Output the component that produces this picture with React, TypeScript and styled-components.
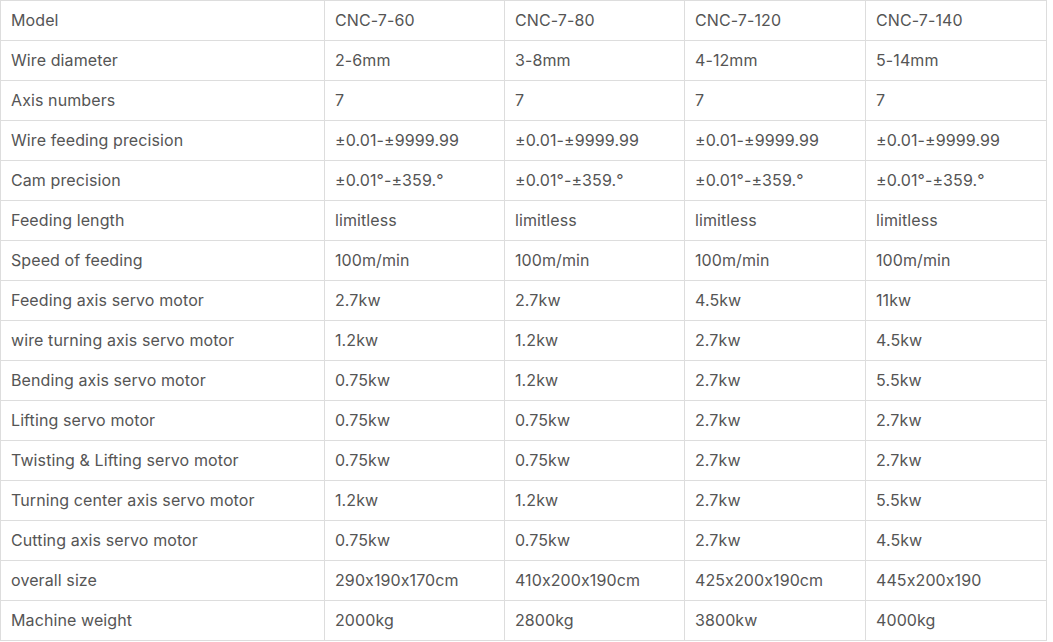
import React from "react";
import styled, { createGlobalStyle } from "styled-components";

const Global = createGlobalStyle`
  html, body { margin: 0; padding: 0; background: #fff; }
  body { font-family: Inter, "Noto Sans", sans-serif; }
`;

const Table = styled.table`
  border-collapse: collapse;
  table-layout: fixed;
  width: 1047px;
  font-family: Inter, "Noto Sans", sans-serif;
  font-size: 16px;
  letter-spacing: 0.1px;
  font-feature-settings: "calt" 0;
  color: #555;
`;

const Row = styled.tr`
  height: 40px;
`;

const Cell = styled.td`
  border: 1px solid #ddd;
  padding: 0 10px 2px 10px;
  height: 39px;
  box-sizing: border-box;
  white-space: nowrap;
  vertical-align: middle;
`;

const rows: string[][] = [
  ["Model", "CNC-7-60", "CNC-7-80", "CNC-7-120", "CNC-7-140"],
  ["Wire diameter", "2-6mm", "3-8mm", "4-12mm", "5-14mm"],
  ["Axis numbers", "7", "7", "7", "7"],
  ["Wire feeding precision", "±0.01-±9999.99", "±0.01-±9999.99", "±0.01-±9999.99", "±0.01-±9999.99"],
  ["Cam precision", "±0.01°-±359.°", "±0.01°-±359.°", "±0.01°-±359.°", "±0.01°-±359.°"],
  ["Feeding length", "limitless", "limitless", "limitless", "limitless"],
  ["Speed of feeding", "100m/min", "100m/min", "100m/min", "100m/min"],
  ["Feeding axis servo motor", "2.7kw", "2.7kw", "4.5kw", "11kw"],
  ["wire turning axis servo motor", "1.2kw", "1.2kw", "2.7kw", "4.5kw"],
  ["Bending axis servo motor", "0.75kw", "1.2kw", "2.7kw", "5.5kw"],
  ["Lifting servo motor", "0.75kw", "0.75kw", "2.7kw", "2.7kw"],
  ["Twisting & Lifting servo motor", "0.75kw", "0.75kw", "2.7kw", "2.7kw"],
  ["Turning center axis servo motor", "1.2kw", "1.2kw", "2.7kw", "5.5kw"],
  ["Cutting axis servo motor", "0.75kw", "0.75kw", "2.7kw", "4.5kw"],
  ["overall size", "290x190x170cm", "410x200x190cm", "425x200x190cm", "445x200x190"],
  ["Machine weight", "2000kg", "2800kg", "3800kw", "4000kg"],
];

const widths = [324, 180, 180, 181, 181];

export default function App() {
  return (
    <>
      <Global />
      <Table>
        <colgroup>
          {widths.map((w, i) => (
            <col key={i} style={{ width: w }} />
          ))}
        </colgroup>
        <tbody>
          {rows.map((r, i) => (
            <Row key={i}>
              {r.map((c, j) => (
                <Cell key={j}>{c}</Cell>
              ))}
            </Row>
          ))}
        </tbody>
      </Table>
    </>
  );
}
